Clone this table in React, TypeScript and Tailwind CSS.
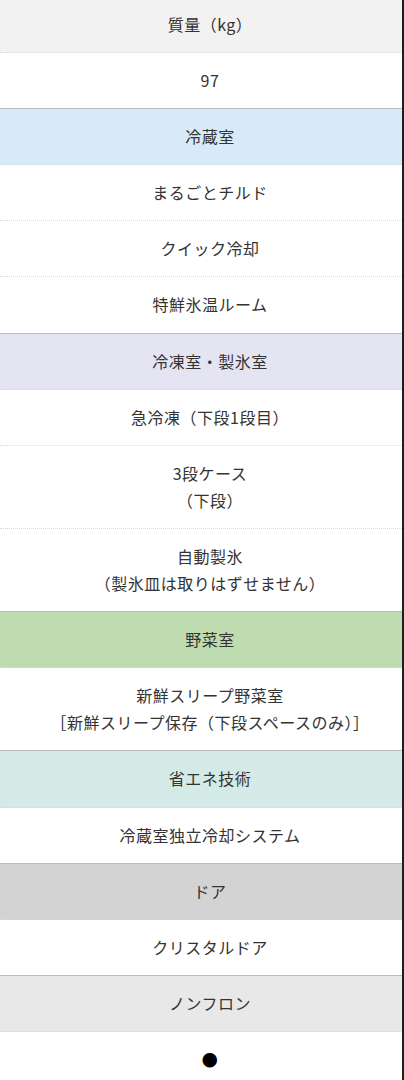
const font = { fontFamily: '"Noto Sans CJK JP", "Noto Sans", sans-serif' }

type Row = { lines: string[] }
type Group = { title: string; bg: string; rows: Row[]; first?: boolean }

const groups: Group[] = [
  { title: "質量（kg）", bg: "bg-[#f2f2f2]", rows: [{ lines: ["97"] }], first: true },
  {
    title: "冷蔵室",
    bg: "bg-[#d6ebf7]",
    rows: [{ lines: ["まるごとチルド"] }, { lines: ["クイック冷却"] }, { lines: ["特鮮氷温ルーム"] }],
  },
  {
    title: "冷凍室・製氷室",
    bg: "bg-[#e5e4f2]",
    rows: [
      { lines: ["急冷凍（下段1段目）"] },
      { lines: ["3段ケース", "（下段）"] },
      { lines: ["自動製氷", "（製氷皿は取りはずせません）"] },
    ],
  },
  {
    title: "野菜室",
    bg: "bg-[#bedcaf]",
    rows: [{ lines: ["新鮮スリープ野菜室", "［新鮮スリープ保存（下段スペースのみ）］"] }],
  },
  { title: "省エネ技術", bg: "bg-[#d3eae7]", rows: [{ lines: ["冷蔵室独立冷却システム"] }] },
  { title: "ドア", bg: "bg-[#d3d3d3]", rows: [{ lines: ["クリスタルドア"] }] },
  { title: "ノンフロン", bg: "bg-[#e8e8e8]", rows: [{ lines: ["●"] }] },
]

export default function App() {
  return (
    <div
      className="w-[404px] h-[1080px] overflow-hidden bg-white border-r-2 border-[#1e1e1e] text-[#333] text-[16px] leading-[27.1px] tracking-[0.5px]"
      style={font}
    >
      {groups.map((g) => (
        <div key={g.title} className="border-b border-[#bdbdbd]">
          <div
            className={`${g.bg} text-center pl-[18px] ${g.first ? "pt-[11px]" : "pt-[14px]"} pb-[14px] border-b border-dotted border-[#d9d9d9]`}
          >
            {g.title}
          </div>
          {g.rows.map((r, i) => (
            <div
              key={i}
              className={`text-center pl-[18px] py-[14px] ${i < g.rows.length - 1 ? "border-b border-dotted border-[#d9d9d9]" : ""}`}
            >
              {r.lines.map((l) => (
                <div key={l} className={l === "●" ? "text-[16px] text-black" : ""}>
                  {l}
                </div>
              ))}
            </div>
          ))}
        </div>
      ))}
    </div>
  )
}
